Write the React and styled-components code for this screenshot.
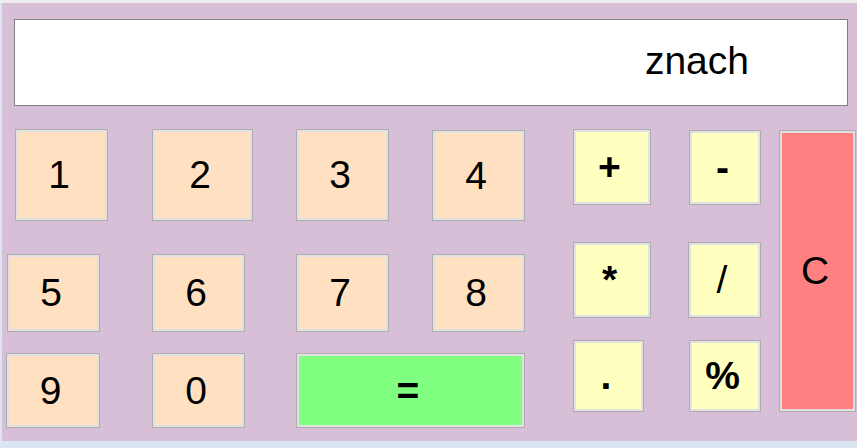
import React from 'react';
import styled, { createGlobalStyle } from 'styled-components';

const GlobalStyle = createGlobalStyle`
  html, body {
    margin: 0;
    padding: 0;
    background: #dbe6f2;
  }
  body {
    font-family: "Liberation Sans", Arial, sans-serif;
  }
`;

const Window = styled.div`
  width: 857px;
  height: 448px;
  box-sizing: border-box;
  border-top: 3px solid #eeeeee;
  padding-left: 2px;
`;

const Panel = styled.div`
  width: 855px;
  height: 438px;
  background: #d8bfd8;
  display: flex;
  flex-direction: column;
`;

const Display = styled.div`
  margin: 16px 0 0 12px;
  width: 834px;
  height: 87px;
  box-sizing: border-box;
  border: 1px solid #808080;
  background: #ffffff;
  display: flex;
  align-items: center;
  justify-content: flex-end;
  padding: 0 98px 3px 0;
  font-size: 39px;
  color: #000;
`;

const Keypad = styled.div`
  margin: 23px 0 0 4px;
  display: grid;
  grid-template-columns: 146px 144px 136px 141px 115px 91px 78px;
  grid-template-rows: 113px 98px 101px;
  align-items: start;
  justify-items: start;
`;

const palette = {
  digit: '#ffe0c0',
  op: '#ffffc0',
  equals: '#80ff80',
  clear: '#ff8080',
};

const Key = styled.button`
  grid-column: ${p => p.$col};
  grid-row: ${p => p.$row};
  width: ${p => p.$w}px;
  height: ${p => p.$h}px;
  margin-left: ${p => p.$dx || 0}px;
  margin-top: ${p => p.$dy || 0}px;
  box-sizing: border-box;
  padding: 0 5px 0 0;
  border: 1px solid #adadad;
  box-shadow: inset 0 0 0 2px #e1e1e1;
  background: ${p => palette[p.$kind]};
  font-family: "Liberation Sans", Arial, sans-serif;
  font-size: 39px;
  font-weight: ${p => (p.$bold ? 700 : 400)};
  color: #000;
  display: flex;
  align-items: center;
  justify-content: center;
  cursor: pointer;
`;

const keys = [
  { label: '1', kind: 'digit', col: '1', row: '1', w: 93, h: 92, dx: 9 },
  { label: '2', kind: 'digit', col: '2', row: '1', w: 101, h: 92 },
  { label: '3', kind: 'digit', col: '3', row: '1', w: 93, h: 92 },
  { label: '4', kind: 'digit', col: '4', row: '1', w: 93, h: 91, dy: 1 },
  { label: '+', kind: 'op', col: '5', row: '1', w: 78, h: 76, bold: true },
  { label: '-', kind: 'op', col: '6', row: '1', w: 72, h: 75, dx: 1, dy: 1, bold: true },
  { label: 'C', kind: 'clear', col: '7', row: '1 / span 3', w: 77, h: 282, dy: 1 },
  { label: '5', kind: 'digit', col: '1', row: '2', w: 93, h: 78, dx: 1, dy: 12 },
  { label: '6', kind: 'digit', col: '2', row: '2', w: 93, h: 78, dy: 12 },
  { label: '7', kind: 'digit', col: '3', row: '2', w: 93, h: 78, dy: 12 },
  { label: '8', kind: 'digit', col: '4', row: '2', w: 93, h: 78, dy: 12 },
  { label: '*', kind: 'op', col: '5', row: '2', w: 78, h: 76, bold: true },
  { label: '/', kind: 'op', col: '6', row: '2', w: 73, h: 76 },
  { label: '9', kind: 'digit', col: '1', row: '3', w: 94, h: 75, dy: 13 },
  { label: '0', kind: 'digit', col: '2', row: '3', w: 93, h: 75, dy: 13 },
  { label: '=', kind: 'equals', col: '3 / span 2', row: '3', w: 229, h: 75, dy: 13, bold: true },
  { label: '.', kind: 'op', col: '5', row: '3', w: 71, h: 72, bold: true },
  { label: '%', kind: 'op', col: '6', row: '3', w: 72, h: 72, dx: 1, bold: true },
];

export default function App() {
  return (
    <Window>
      <GlobalStyle />
      <Panel>
        <Display>znach</Display>
        <Keypad>
          {keys.map(k => (
            <Key
              key={k.label}
              $kind={k.kind}
              $col={k.col}
              $row={k.row}
              $w={k.w}
              $h={k.h}
              $dx={k.dx}
              $dy={k.dy}
              $bold={k.bold}
            >
              {k.label}
            </Key>
          ))}
        </Keypad>
      </Panel>
    </Window>
  );
}
